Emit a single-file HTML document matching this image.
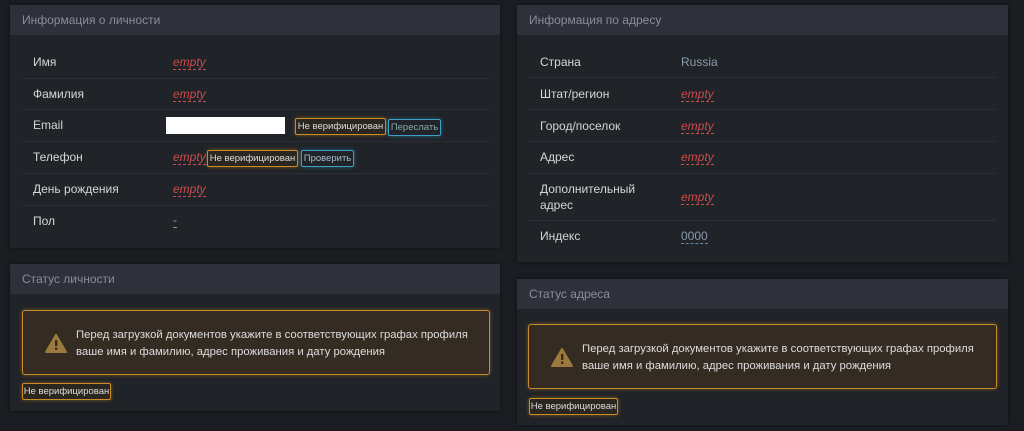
<!DOCTYPE html>
<html><head><meta charset="utf-8"><style>
*{box-sizing:border-box;margin:0;padding:0}
body{width:1024px;height:431px;background:#1b1d22;font-family:"Liberation Sans",sans-serif;color:#d6d6d6;position:relative;overflow:hidden;font-size:12px}
.p{position:absolute;background:#202328;box-shadow:0 0 4px rgba(0,0,0,.5)}
.h{position:absolute;left:0;right:0;top:0;height:30px;background:#2e313a;color:#8a8d96;font-size:12px;line-height:30px;padding-left:12px}
.t{position:absolute;white-space:nowrap}
.sep{position:absolute;height:1px;background:#2c2f35}
.e{color:#c94b4b;font-style:italic;border-bottom:1px dashed #c94b4b;line-height:13px}
.b{position:absolute;border:1px solid #d08a22;border-radius:2px;font-size:9.5px;color:#ddd;line-height:15px;height:17px;width:91px;text-align:center;background:#2a2620;box-shadow:0 0 4px rgba(208,138,34,.5);white-space:nowrap}
.c{position:absolute;border:1px solid #3aa0c8;border-radius:2px;font-size:9.5px;color:#a8bccc;line-height:15px;height:17px;text-align:center;box-shadow:0 0 4px rgba(58,160,200,.5);white-space:nowrap}
.a{position:absolute;border:1px solid #c98a2a;border-radius:3px;background:#342b23;box-shadow:0 0 4px rgba(201,138,42,.5)}
.a .m{position:absolute;left:53px;top:16px;font-size:11.3px;line-height:17px;color:#ddd;white-space:nowrap}
.a svg{position:absolute;left:22px;top:23px}
</style></head><body>
<div class="p" style="left:10px;top:5px;width:490px;height:243px"><div class="h">Информация о личности</div></div>
<div class="t" style="left:33px;top:55px">Имя</div><div class="t e" style="left:173px;top:56px">empty</div>
<div class="sep" style="left:22px;top:78px;width:468px"></div>
<div class="t" style="left:33px;top:87px">Фамилия</div><div class="t e" style="left:173px;top:88px">empty</div>
<div class="sep" style="left:22px;top:109px;width:468px"></div>
<div class="t" style="left:33px;top:118px">Email</div>
<div style="position:absolute;left:166px;top:117px;width:119px;height:17px;background:#fff"></div>
<div class="b" style="left:295px;top:118px">Не верифицирован</div>
<div class="c" style="left:388px;top:119px;width:53px;color:#8aa">Переслать</div>
<div class="sep" style="left:22px;top:141px;width:468px"></div>
<div class="t" style="left:33px;top:150px">Телефон</div><div class="t e" style="left:173px;top:151px">empty</div>
<div class="b" style="left:207px;top:150px">Не верифицирован</div>
<div class="c" style="left:301px;top:150px;width:53px">Проверить</div>
<div class="sep" style="left:22px;top:173px;width:468px"></div>
<div class="t" style="left:33px;top:182px">День рождения</div><div class="t e" style="left:173px;top:183px">empty</div>
<div class="sep" style="left:22px;top:205px;width:468px"></div>
<div class="t" style="left:33px;top:214px">Пол</div><div class="t" style="left:173px;top:213px;color:#8ab;border-bottom:1px dashed #6a8">-</div>

<div class="p" style="left:10px;top:264px;width:490px;height:147px"><div class="h">Статус личности</div>
<div class="a" style="left:12px;top:46px;width:468px;height:65px"><svg width="22" height="19" viewBox="0 0 22 19"><path d="M11 1 L21 18 L1 18 Z" fill="#9c7a3e" stroke="#9c7a3e" stroke-linejoin="round" stroke-width="2"/><rect x="10" y="6" width="2.4" height="6" fill="#342b23"/><rect x="10" y="13.5" width="2.4" height="2.4" fill="#342b23"/></svg><div class="m">Перед загрузкой документов укажите в соответствующих графах профиля<br>ваше имя и фамилию, адрес проживания и дату рождения</div></div>
<div class="b" style="left:12px;top:119px;width:89px">Не верифицирован</div></div>

<div class="p" style="left:517px;top:5px;width:491px;height:257px"><div class="h">Информация по адресу</div></div>
<div class="t" style="left:540px;top:55px">Страна</div><div class="t" style="left:681px;top:55px;color:#8a9aaa">Russia</div>
<div class="sep" style="left:528px;top:77px;width:468px"></div>
<div class="t" style="left:540px;top:87px">Штат/регион</div><div class="t e" style="left:681px;top:88px">empty</div>
<div class="sep" style="left:528px;top:109px;width:468px"></div>
<div class="t" style="left:540px;top:119px">Город/поселок</div><div class="t e" style="left:681px;top:120px">empty</div>
<div class="sep" style="left:528px;top:141px;width:468px"></div>
<div class="t" style="left:540px;top:150px">Адрес</div><div class="t e" style="left:681px;top:151px">empty</div>
<div class="sep" style="left:528px;top:173px;width:468px"></div>
<div class="t" style="left:540px;top:181px;line-height:16px">Дополнительный<br>адрес</div><div class="t e" style="left:681px;top:191px">empty</div>
<div class="sep" style="left:528px;top:220px;width:468px"></div>
<div class="t" style="left:540px;top:229px">Индекс</div><div class="t" style="left:681px;top:229px;color:#8a9aaa;border-bottom:1px dashed #5a8aaa">0000</div>

<div class="p" style="left:517px;top:279px;width:491px;height:146px"><div class="h">Статус адреса</div>
<div class="a" style="left:11px;top:45px;width:469px;height:65px"><svg width="22" height="19" viewBox="0 0 22 19"><path d="M11 1 L21 18 L1 18 Z" fill="#9c7a3e" stroke="#9c7a3e" stroke-linejoin="round" stroke-width="2"/><rect x="10" y="6" width="2.4" height="6" fill="#342b23"/><rect x="10" y="13.5" width="2.4" height="2.4" fill="#342b23"/></svg><div class="m">Перед загрузкой документов укажите в соответствующих графах профиля<br>ваше имя и фамилию, адрес проживания и дату рождения</div></div>
<div class="b" style="left:12px;top:119px;width:89px">Не верифицирован</div></div>
</body></html>
